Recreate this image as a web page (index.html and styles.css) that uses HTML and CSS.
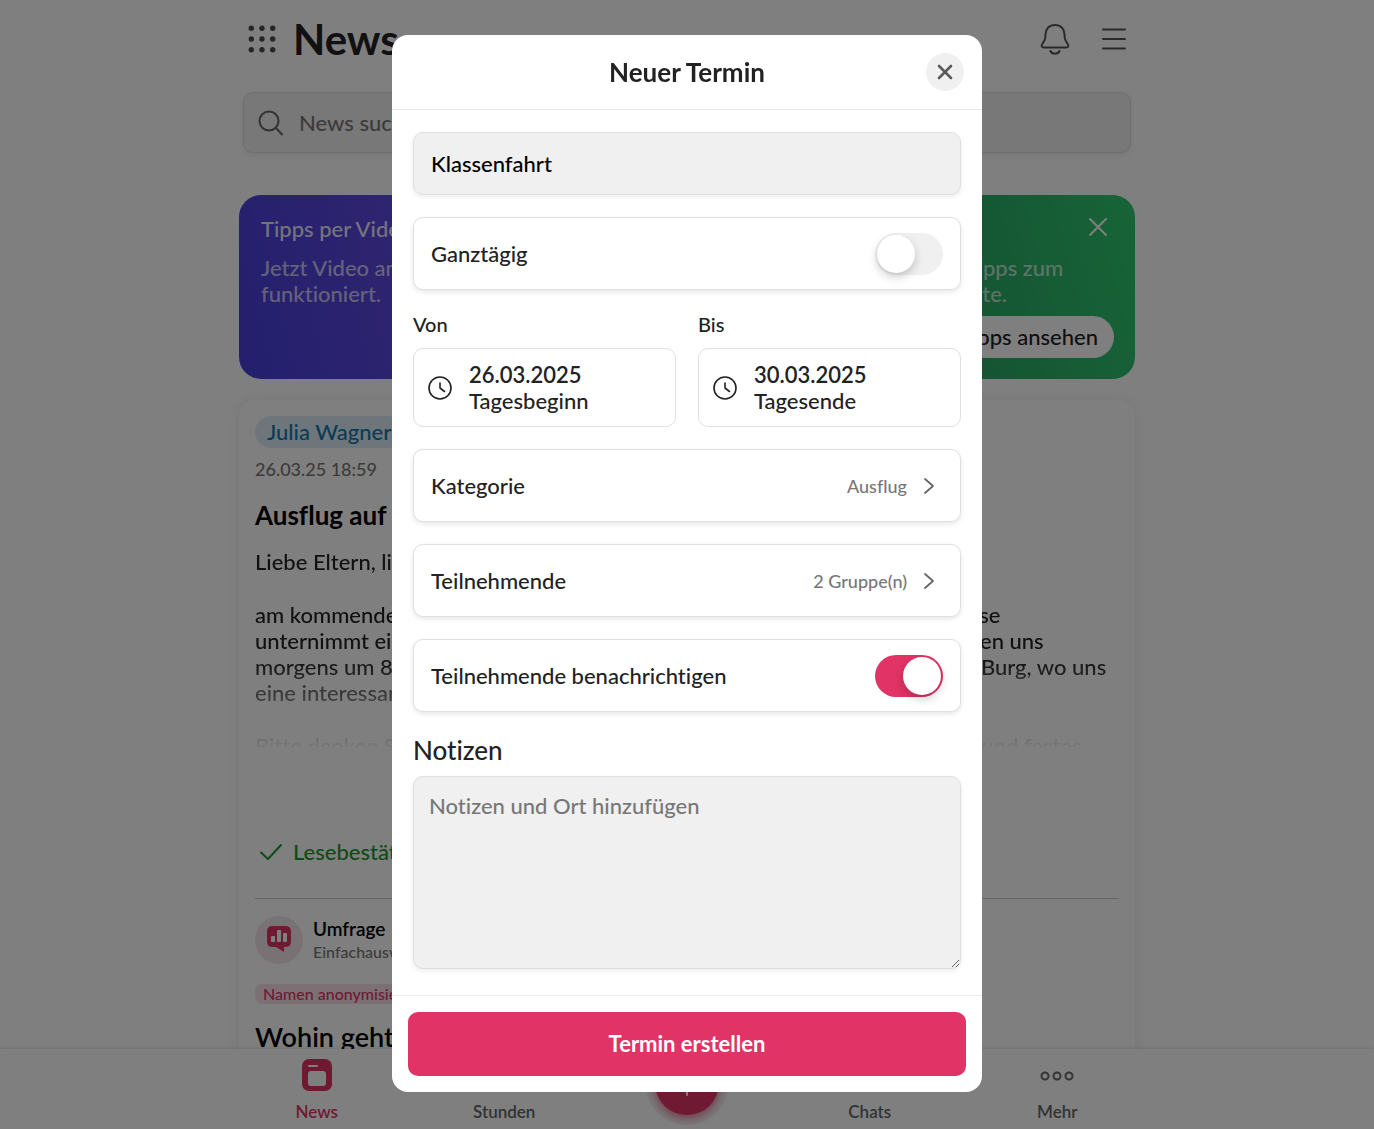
FILE: index.html
```html
<!DOCTYPE html>
<html lang="de">
<head>
    <meta charset="UTF-8">
    <meta name="viewport" content="width=device-width, initial-scale=1.0">
    <title>News - Neuer Termin</title>
    <link rel="stylesheet" href="styles.css">
</head>
<body>
    <div class="app">
        <main class="feed">
            <header class="topbar">
                <button class="icon-btn" aria-label="Apps">
                    <svg width="30" height="30" viewBox="0 0 30 30" fill="#4a4a4a">
                        <circle cx="4.300" cy="4.300" r="2.700"/><circle cx="15" cy="4.300" r="2.700"/><circle cx="25.700" cy="4.300" r="2.700"/>
                        <circle cx="4.300" cy="15" r="2.700"/><circle cx="15" cy="15" r="2.700"/><circle cx="25.700" cy="15" r="2.700"/>
                        <circle cx="4.300" cy="25.700" r="2.700"/><circle cx="15" cy="25.700" r="2.700"/><circle cx="25.700" cy="25.700" r="2.700"/>
                    </svg>
                </button>
                <h1>News</h1>
                <div class="topbar-actions">
                    <button class="icon-btn" aria-label="Benachrichtigungen">
                        <svg width="30" height="32" viewBox="0 0 30 32" fill="none" stroke="#555" stroke-width="2" stroke-linecap="round" stroke-linejoin="round">
                            <path d="M15 2C9 2 5.500 6 5.500 11.500C5.500 17 4.500 18 2.500 20.500C1 22.500 1.500 24.500 4 24.500H26C28.500 24.500 29 22.500 27.500 20.500C25.500 18 24.500 17 24.500 11.500C24.500 6 21 2 15 2Z"/>
                            <path d="M10.500 28C12 31.500 18 31.500 19.500 28"/>
                        </svg>
                    </button>
                    <button class="icon-btn" aria-label="Menü">
                        <svg width="26" height="24" viewBox="0 0 26 24" fill="none" stroke="#555" stroke-width="2" stroke-linecap="round">
                            <path d="M2 2.500H24M2 12H24M2 21.500H24"/>
                        </svg>
                    </button>
                </div>
            </header>

            <div class="search">
                <svg width="26" height="26" viewBox="0 0 26 26" fill="none" stroke="#666" stroke-width="2" stroke-linecap="round">
                    <circle cx="11" cy="11" r="9.500"/>
                    <path d="M18 18L24 24.500"/>
                </svg>
                <input type="search" placeholder="News suchen" aria-label="News suchen">
            </div>

            <section class="tips">
                <article class="tip tip-video">
                    <h2>Tipps per Video</h2>
                    <p>Jetzt Video ansehen, wie alles<br>funktioniert.</p>
                </article>
                <article class="tip tip-start">
                    <h2>Erste Schritte</h2>
                    <p>Auf einen Blick Hilfe und Tipps zum<br>Starten auf unserer Webseite.</p>
                    <a class="tip-link" href="#">Tipps ansehen</a>
                    <button class="tip-close" aria-label="Schließen">
                        <svg width="20" height="20" viewBox="0 0 20 20" fill="none" stroke="#fff" stroke-width="2" stroke-linecap="round">
                            <path d="M2 2L18 18M18 2L2 18"/>
                        </svg>
                    </button>
                </article>
            </section>

            <article class="post">
                <span class="author">Julia Wagner</span>
                <time class="date">26.03.25 18:59</time>
                <h2>Ausflug auf die Burg</h2>
                <div class="post-text">
                    <p>Liebe Eltern, liebe Schülerinnen und Schüler,</p>
                    <p>am kommenden Freitag ist es endlich wieder so weit und unsere ganze Klasse<br>
                    unternimmt einen gemeinsamen Ausflug in die nähere Umgebung. Wir treffen uns<br>
                    morgens um 8 Uhr vor der Schule und fahren von dort aus mit dem Bus zur Burg, wo uns<br>
                    eine interessante Führung erwartet.</p>
                    <p>Bitte denken Sie an ausreichend Essen und Getränke, wetterfeste Kleidung und festes</p>
                </div>
                <div class="receipt">
                    <svg width="24" height="18" viewBox="0 0 24 18" fill="none" stroke="#1a9a2b" stroke-width="2" stroke-linecap="round" stroke-linejoin="round">
                        <path d="M2 9.500L9 16L22 2"/>
                    </svg>
                    Lesebestätigung
                </div>
                <div class="poll-head">
                    <span class="poll-icon">
                        <svg width="26" height="28" viewBox="0 0 26 28">
                            <path fill="#e13365" d="M6.500 0H19.500Q25 0 25 5.500V15.500Q25 21 19.500 21H18V26L10 21H6.500Q1 21 1 15.500V5.500Q1 0 6.500 0Z"/>
                            <rect x="5" y="10" width="4" height="6" rx="1" fill="#fff"/>
                            <rect x="11" y="4" width="4" height="12" rx="1" fill="#fff"/>
                            <rect x="17" y="7" width="4" height="9" rx="1" fill="#fff"/>
                        </svg>
                    </span>
                    <div>
                        <h3>Umfrage</h3>
                        <p>Einfachauswahl</p>
                    </div>
                </div>
                <span class="poll-tag">Namen anonymisiert</span>
                <h2 class="poll-title">Wohin geht es?</h2>
            </article>
        </main>

        <nav class="tabbar">
            <div class="tabs">
                <a class="tab active" href="#">
                    <svg width="30" height="32" viewBox="0 0 30 32">
                        <rect width="30" height="32" rx="7" fill="#e13365"/>
                        <rect x="6" y="12" width="18" height="15" rx="3" fill="#fff"/>
                        <path d="M7 7H15" stroke="#fff" stroke-width="2" stroke-linecap="round"/>
                    </svg>
                    News
                </a>
                <a class="tab" href="#">
                    <svg width="30" height="32" viewBox="0 0 30 32" fill="none" stroke="#666" stroke-width="2">
                        <rect x="2" y="5" width="26" height="24" rx="5"/>
                    </svg>
                    Stunden
                </a>
                <button class="add" aria-label="Neu">
                    <svg width="26" height="26" viewBox="0 0 26 26" stroke="#fff" stroke-width="2" stroke-linecap="round">
                        <path d="M13 1V25M1 13H25"/>
                    </svg>
                </button>
                <a class="tab" href="#">
                    <svg width="30" height="32" viewBox="0 0 30 32" fill="none" stroke="#666" stroke-width="2">
                        <circle cx="15" cy="16" r="12"/>
                    </svg>
                    Chats
                </a>
                <a class="tab" href="#">
                    <svg width="34" height="32" viewBox="0 0 34 32" fill="none" stroke="#666" stroke-width="2">
                        <circle cx="5" cy="17" r="3.500"/><circle cx="17" cy="17" r="3.500"/><circle cx="29" cy="17" r="3.500"/>
                    </svg>
                    Mehr
                </a>
            </div>
        </nav>
    </div>

    <div class="overlay">
        <form class="modal" role="dialog" aria-labelledby="modal-title">
            <header class="modal-head">
                <h2 id="modal-title">Neuer Termin</h2>
                <button type="button" class="modal-close" aria-label="Schließen">
                    <svg width="16" height="16" viewBox="0 0 16 16" fill="none" stroke="#5a5a5a" stroke-width="2.600" stroke-linecap="round">
                        <path d="M2 2L14 14M14 2L2 14"/>
                    </svg>
                </button>
            </header>

            <div class="modal-body">
                <input class="field" type="text" value="Klassenfahrt" aria-label="Titel">

                <label class="row">
                    Ganztägig
                    <input type="checkbox" class="switch">
                </label>

                <div class="dates">
                    <div>
                        <label class="label" for="from">Von</label>
                        <button type="button" class="date-box" id="from">
                            <svg width="24" height="24" viewBox="0 0 24 24" fill="none" stroke="#222" stroke-width="1.600" stroke-linecap="round" stroke-linejoin="round">
                                <circle cx="12" cy="12" r="11"/>
                                <path d="M12 7V12L16.500 15.500"/>
                            </svg>
                            <span><b>26.03.2025</b>Tagesbeginn</span>
                        </button>
                    </div>
                    <div>
                        <label class="label" for="to">Bis</label>
                        <button type="button" class="date-box" id="to">
                            <svg width="24" height="24" viewBox="0 0 24 24" fill="none" stroke="#222" stroke-width="1.600" stroke-linecap="round" stroke-linejoin="round">
                                <circle cx="12" cy="12" r="11"/>
                                <path d="M12 7V12L16.500 15.500"/>
                            </svg>
                            <span><b>30.03.2025</b>Tagesende</span>
                        </button>
                    </div>
                </div>

                <button type="button" class="row">
                    Kategorie
                    <span class="value">Ausflug
                        <svg width="12" height="18" viewBox="0 0 12 18" fill="none" stroke="#666" stroke-width="1.800" stroke-linecap="round" stroke-linejoin="round">
                            <path d="M2 2L10 9L2 16"/>
                        </svg>
                    </span>
                </button>

                <button type="button" class="row">
                    Teilnehmende
                    <span class="value">2 Gruppe(n)
                        <svg width="12" height="18" viewBox="0 0 12 18" fill="none" stroke="#666" stroke-width="1.800" stroke-linecap="round" stroke-linejoin="round">
                            <path d="M2 2L10 9L2 16"/>
                        </svg>
                    </span>
                </button>

                <label class="row">
                    Teilnehmende benachrichtigen
                    <input type="checkbox" class="switch" checked>
                </label>

                <div class="notes">
                    <label class="notes-label" for="notes">Notizen</label>
                    <textarea class="field" id="notes" placeholder="Notizen und Ort hinzufügen"></textarea>
                </div>
            </div>

            <footer class="modal-foot">
                <button type="submit" class="submit">Termin erstellen</button>
            </footer>
        </form>
    </div>
</body>
</html>
```
FILE: styles.css
```css
* {
    box-sizing: border-box;
}
body {
    margin: 0;
    font-family: Lato, "Noto Sans", sans-serif;
    font-size: 22px;
    font-weight: 500;
    font-variant-ligatures: none;
    line-height: 26px;
    color: #222;
    background: #fff;
}
h1, h2, h3, p {
    margin: 0;
}
button, input, textarea {
    font: inherit;
    font-variant-ligatures: none;
    color: inherit;
}
svg {
    display: block;
    flex: none;
}

/* feed */
.app {
    display: flex;
    flex-direction: column;
    height: 100vh;
}
.feed {
    flex: 1;
    min-height: 0;
    overflow: hidden;
    width: 100%;
    max-width: 940px;
    margin: 0 auto;
    padding: 0 22px;
}
.topbar {
    display: flex;
    align-items: center;
    height: 77px;
    padding: 0 8px;
    gap: 16px;
}
.topbar h1 {
    font-size: 42px;
    font-weight: 700;
    line-height: 52px;
}
.icon-btn {
    padding: 0;
    border: none;
    background: none;
    cursor: pointer;
}
.topbar-actions {
    display: flex;
    align-items: center;
    gap: 31px;
    margin-left: auto;
}
.search {
    display: flex;
    align-items: center;
    gap: 15px;
    height: 61px;
    margin: 15px 4px 0;
    padding: 0 14px;
    border: 1px solid #dedede;
    border-radius: 10px;
    background: #f0f0f0;
    box-shadow: 0 2px 6px rgba(0, 0, 0, 0.08);
}
.search input {
    flex: 1;
    min-width: 0;
    padding: 0;
    border: none;
    background: none;
}
.search input::placeholder {
    color: #777;
    opacity: 1;
}
.tips {
    display: grid;
    grid-template-columns: 1fr 1fr;
    gap: 22px;
    margin-top: 42px;
}
.tip {
    position: relative;
    height: 184px;
    padding: 21px 22px;
    border-radius: 22px;
    color: rgba(255, 255, 255, 0.9);
}
.tip h2 {
    margin-bottom: 13px;
    font-size: 22px;
    font-weight: 500;
}
.tip p {
    color: rgba(255, 255, 255, 0.7);
    white-space: nowrap;
}
.tip-video {
    background: linear-gradient(75deg, #4640dc, #8454e4);
}
.tip-start {
    background: linear-gradient(75deg, #1f8058, #30c870);
}
.tip-link {
    position: absolute;
    right: 21px;
    bottom: 21px;
    padding: 8px 16px;
    border-radius: 21px;
    background: #fff;
    color: #222;
    text-decoration: none;
}
.tip-close {
    position: absolute;
    top: 22px;
    right: 27px;
    padding: 0;
    border: none;
    background: none;
    cursor: pointer;
}
.post {
    display: flex;
    flex-direction: column;
    align-items: flex-start;
    margin-top: 21px;
    padding: 16px;
    border-radius: 16px;
    background: #fff;
    box-shadow: 0 0 14px rgba(0, 0, 0, 0.08);
}
.author {
    padding: 3px 12px;
    border-radius: 16px;
    background: #dcecf8;
    color: #1278ac;
}
.date {
    margin-top: 8px;
    font-size: 18px;
    color: #777;
}
.post h2 {
    margin-top: 16px;
    font-size: 26px;
    font-weight: 700;
    line-height: 34px;
    color: #000;
}
.post-text {
    height: 198px;
    margin-top: 17px;
    overflow: hidden;
    white-space: nowrap;
    -webkit-mask-image: linear-gradient(#000 110px, transparent 204px);
    mask-image: linear-gradient(#000 110px, transparent 204px);
}
.post-text p + p {
    margin-top: 27px;
}
.receipt {
    display: flex;
    align-items: center;
    align-self: stretch;
    gap: 10px;
    margin-top: 92px;
    padding: 0 4px 33px;
    border-bottom: 1px solid #ccc;
    color: #1a9a2b;
}
.poll-head {
    display: flex;
    align-items: center;
    gap: 10px;
    margin-top: 17px;
}
.poll-icon {
    display: grid;
    place-items: center;
    width: 48px;
    height: 48px;
    border-radius: 50%;
    background: #f3e4e9;
}
.poll-head h3 {
    font-size: 19px;
    font-weight: 600;
    line-height: 24px;
    color: #000;
}
.poll-head p {
    font-size: 16px;
    line-height: 22px;
    color: #777;
}
.poll-tag {
    margin-top: 20px;
    padding: 0 8px;
    border-radius: 8px;
    background: #f8e0e8;
    font-size: 16px;
    line-height: 20px;
    color: #e13365;
}
.post .poll-title {
    font-weight: 600;
    font-size: 27px;
}

/* bottom navigation */
.tabbar {
    position: relative;
    height: 80px;
    background: #fff;
    box-shadow: 0 -1px 4px rgba(0, 0, 0, 0.12);
}
.tabs {
    display: grid;
    grid-template-columns: 1fr 1fr 178px 1fr 1fr;
    max-width: 928px;
    margin: 0 auto;
    padding-top: 10px;
}
.tab {
    display: flex;
    flex-direction: column;
    align-items: center;
    gap: 10px;
    font-size: 17px;
    line-height: 22px;
    font-weight: 600;
    color: #666;
    text-decoration: none;
}
.tab.active {
    color: #e13365;
}
.add {
    display: grid;
    place-items: center;
    justify-self: center;
    width: 64px;
    height: 64px;
    margin-top: -8px;
    padding: 0;
    border: none;
    border-radius: 50%;
    background: #e13365;
    box-shadow: 0 3px 10px rgba(225, 51, 101, 0.7), 0 0 0 10px rgba(0, 0, 0, 0.05);
    cursor: pointer;
}

/* dialog */
.overlay {
    position: fixed;
    inset: 0;
    padding: 35px 0;
    overflow-y: auto;
    background: rgba(0, 0, 0, 0.5);
}
.modal {
    width: 590px;
    max-width: 100%;
    margin: 0 auto;
    border-radius: 16px;
    background: #fff;
    overflow: hidden;
}
.modal-head {
    position: relative;
    padding: 21px 64px;
    border-bottom: 1px solid #ebebeb;
    text-align: center;
}
.modal-head h2 {
    font-size: 26px;
    font-weight: 700;
    line-height: 32px;
}
.modal-close {
    position: absolute;
    top: 18px;
    right: 18px;
    display: grid;
    place-items: center;
    width: 38px;
    height: 38px;
    padding: 0;
    border: none;
    border-radius: 50%;
    background: #f0f0f0;
    cursor: pointer;
}
.modal-body {
    display: flex;
    flex-direction: column;
    gap: 22px;
    padding: 22px 21px 26px;
}
.field {
    display: block;
    width: 100%;
    height: 63px;
    padding: 0 17px;
    border: 1px solid #dfdfdf;
    border-radius: 10px;
    background: #f0f0f0;
    box-shadow: 0 2px 5px rgba(0, 0, 0, 0.08);
    color: #000;
}
textarea.field {
    height: 193px;
    padding: 16px 15px;
    resize: vertical;
}
.field::placeholder {
    color: #777;
    opacity: 1;
}
.row {
    display: flex;
    align-items: center;
    justify-content: space-between;
    width: 100%;
    height: 73px;
    padding: 0 17px;
    border: 1px solid #e0e0e0;
    border-radius: 10px;
    background: #fff;
    box-shadow: 0 2px 5px rgba(0, 0, 0, 0.1);
    cursor: pointer;
}
.value {
    display: flex;
    align-items: center;
    gap: 16px;
    padding-right: 8px;
    font-size: 18px;
    color: #777;
}
.switch {
    appearance: none;
    display: flex;
    width: 68px;
    height: 42px;
    margin: 0;
    padding: 2px;
    border-radius: 21px;
    background: #f0f0f0;
    cursor: pointer;
}
.switch::before {
    content: "";
    width: 38px;
    height: 38px;
    border-radius: 50%;
    background: #fff;
    box-shadow: 0 4px 10px rgba(0, 0, 0, 0.2);
}
.switch:checked {
    justify-content: flex-end;
    background: #e13365;
}
.dates {
    display: grid;
    grid-template-columns: 1fr 1fr;
    gap: 22px;
}
.label {
    display: block;
    margin-bottom: 12px;
    font-size: 20px;
    line-height: 24px;
}
.date-box {
    display: flex;
    align-items: center;
    gap: 17px;
    width: 100%;
    height: 79px;
    padding: 0 14px;
    border: 1px solid #e0e0e0;
    border-radius: 10px;
    background: #fff;
    text-align: left;
    cursor: pointer;
}
.date-box b {
    display: block;
    font-weight: 600;
}
.notes-label {
    display: block;
    margin-bottom: 10px;
    font-size: 26px;
    line-height: 32px;
}
.modal-foot {
    padding: 16px;
    border-top: 1px solid #ebebeb;
}
.submit {
    width: 100%;
    height: 64px;
    border: none;
    border-radius: 10px;
    background: #e13365;
    color: #fff;
    font-weight: 700;
    cursor: pointer;
}
```
